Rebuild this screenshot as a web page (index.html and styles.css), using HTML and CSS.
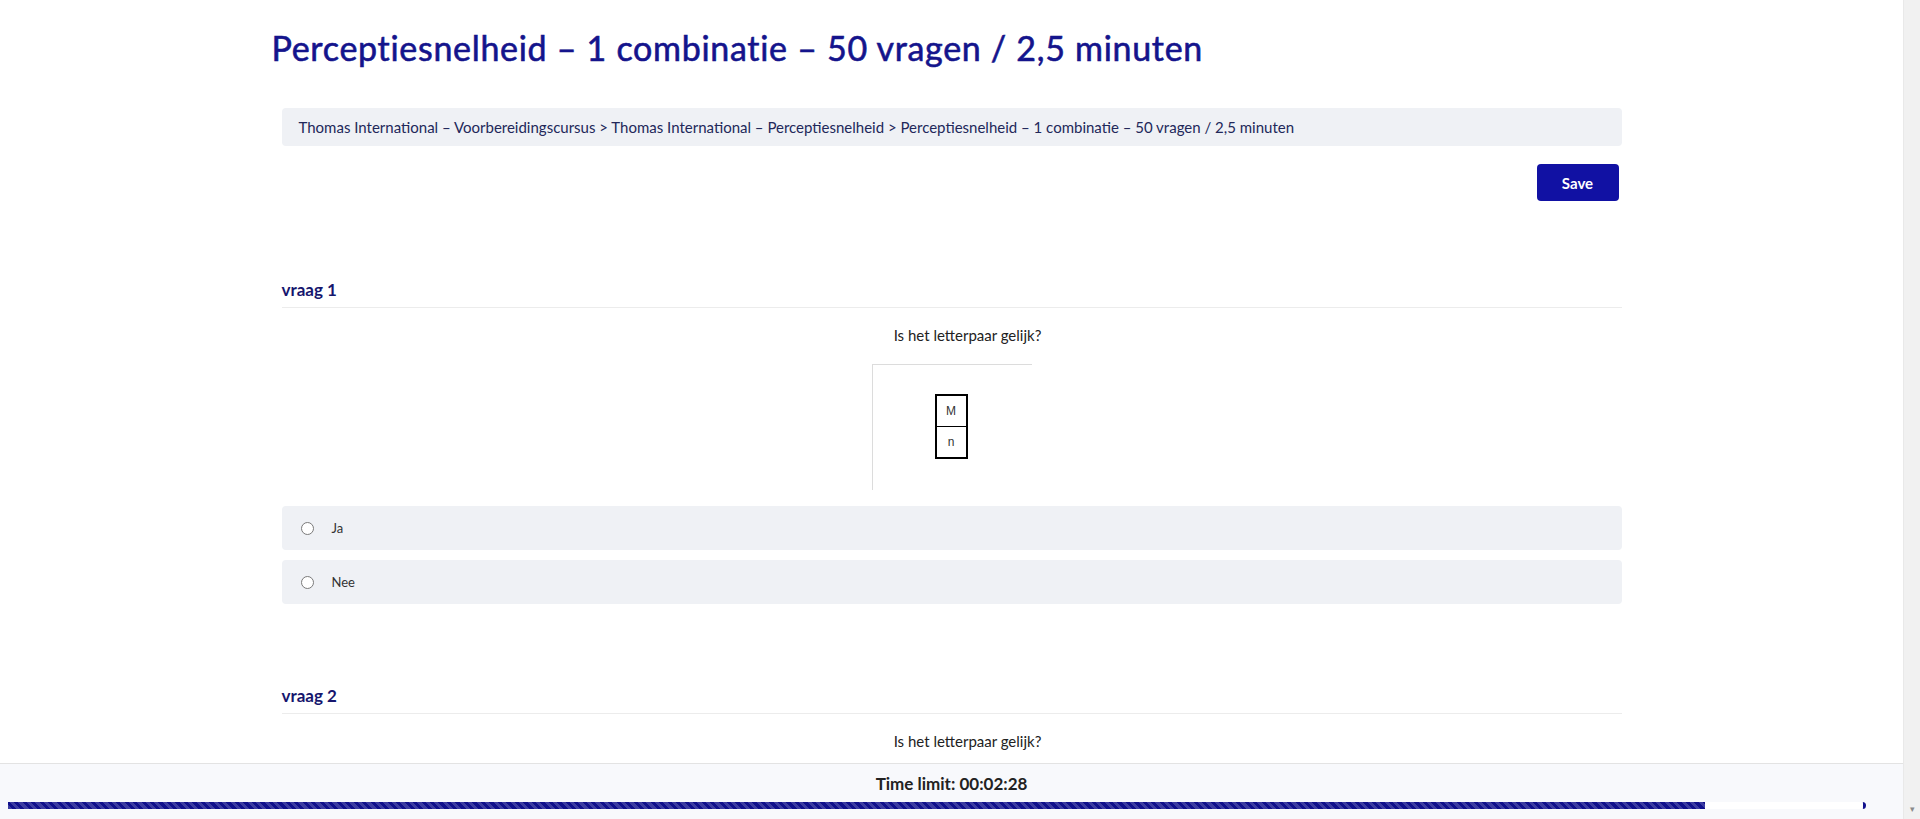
FILE: index.html
```html
<!DOCTYPE html>
<html lang="nl">
<head>
    <meta charset="UTF-8">
    <meta name="viewport" content="width=device-width, initial-scale=1.0">
    <title>Perceptiesnelheid</title>
    <link rel="stylesheet" href="styles.css">
</head>
<body>
    <div class="page">
        <div class="quiz-container">
            <h1 class="quiz-title">Perceptiesnelheid – 1 combinatie – 50 vragen / 2,5 minuten</h1>

            <div class="breadcrumb">
                Thomas International – Voorbereidingscursus &gt; Thomas International – Perceptiesnelheid &gt; Perceptiesnelheid – 1 combinatie – 50 vragen / 2,5 minuten
            </div>

            <div class="quiz-actions">
                <button type="button" class="btn-save">Save</button>
            </div>

            <div class="question">
                <h3 class="question-label">vraag 1</h3>
                <p class="question-text">Is het letterpaar gelijk?</p>
                <div class="pair-figure">
                    <div class="pair-box">
                        <span>M</span>
                        <span>n</span>
                    </div>
                </div>
                <label class="option"><span class="radio"></span>Ja</label>
                <label class="option"><span class="radio"></span>Nee</label>
            </div>

            <div class="question">
                <h3 class="question-label">vraag 2</h3>
                <p class="question-text">Is het letterpaar gelijk?</p>
            </div>
        </div>
    </div>

    <!-- window scrollbar -->
    <div class="scrollbar">
        <span class="scroll-arrow">&#9662;</span>
    </div>

    <!-- fixed timer at the bottom -->
    <div class="timer-bar">
        <div class="timer-text">Time limit: 00:02:28</div>
        <div class="timer-track">
            <div class="timer-fill" style="width: 91.5%"></div>
        </div>
    </div>
</body>
</html>
```

FILE: styles.css
```css
html, body {
    margin: 0;
    height: 100%;
    overflow: hidden;
}
body {
    display: flex;
    font-family: Lato, "Liberation Sans", sans-serif;
    color: #222;
    background-color: #fff;
}
.page {
    flex: 1;
    height: 100vh;
    overflow: hidden;
}
.scrollbar {
    width: 17px;
    height: 100vh;
    background-color: #f1f1f1;
    border-left: 1px solid #e9e9e9;
    box-sizing: border-box;
    display: flex;
    flex-direction: column;
    justify-content: flex-end;
    align-items: center;
}
.scroll-arrow {
    font-size: 9px;
    line-height: 14px;
    color: #8a8a8a;
    margin-bottom: 3px;
}

.quiz-container {
    width: 1340px;
    margin: 0 auto;
    padding-top: 28px;
}
.quiz-title {
    margin: 0 0 40px -10px;
    font-size: 34px;
    line-height: 40px;
    font-weight: 400;
    letter-spacing: 0.7px;
    -webkit-text-stroke: 0.6px #14148c;
    color: #14148c;
}
.breadcrumb {
    background-color: #eff1f5;
    border-radius: 4px;
    padding: 9px 17px;
    font-size: 15px;
    line-height: 20px;
    color: #22285a;
}
.quiz-actions {
    display: flex;
    justify-content: flex-end;
    margin-top: 18px;
    padding-right: 3px;
}
.btn-save {
    width: 82px;
    height: 37px;
    border: none;
    border-radius: 4px;
    background-color: #1111a3;
    color: #fff;
    font-family: inherit;
    font-size: 15px;
    font-weight: 700;
    cursor: pointer;
}
.btn-save:hover {
    background-color: #0b0b7a;
}

.question {
    margin-top: 79px;
}
.question + .question {
    margin-top: 82px;
}
.question-label {
    margin: 0;
    padding-bottom: 7px;
    border-bottom: 1px solid #ececec;
    font-size: 17px;
    line-height: 20px;
    font-weight: 700;
    color: #16166e;
}
.question-text {
    margin: 18px 0 0;
    padding-left: 32px;
    text-align: center;
    font-size: 15px;
    line-height: 18px;
    color: #222;
}
.pair-figure {
    width: 160px;
    height: 126px;
    margin: 20px auto 16px;
    border-top: 1px solid #dcdcdc;
    border-left: 1px solid #dcdcdc;
    padding: 29px 0 0 62px;
    box-sizing: border-box;
}
.pair-box {
    width: 33px;
    border: 2px solid #000;
    box-sizing: border-box;
    display: flex;
    flex-direction: column;
}
.pair-box span {
    height: 30px;
    display: flex;
    align-items: center;
    justify-content: center;
    font-family: "Liberation Sans", Arial, sans-serif;
    font-size: 12px;
    color: #333;
}
.pair-box span + span {
    border-top: 1px solid #000;
}

.option {
    display: flex;
    align-items: center;
    gap: 18px;
    height: 44px;
    padding-left: 19px;
    margin-bottom: 10px;
    background-color: #eff1f5;
    border-radius: 4px;
    font-size: 13px;
    color: #333;
    cursor: pointer;
}
.radio {
    width: 13px;
    height: 13px;
    border: 1px solid #7a7a7a;
    border-radius: 50%;
    background-color: #fff;
    box-sizing: border-box;
}

/* timer footer */
.timer-bar {
    position: fixed;
    left: 0;
    right: 17px;
    bottom: 0;
    height: 56px;
    background-color: #f8f9fc;
    border-top: 1px solid #e3e3e3;
    box-sizing: border-box;
    padding-top: 10px;
}
.timer-text {
    text-align: center;
    font-size: 17px;
    line-height: 20px;
    font-weight: 700;
    color: #222;
}
.timer-track {
    margin: 8px 37px 0 8px;
    height: 7px;
    border-right: 3px solid #10108c;
    border-radius: 0 4px 4px 0;
    background-color: #fff;
}
.timer-fill {
    height: 100%;
    background-color: #10108c;
    background-image: repeating-linear-gradient(45deg, rgba(255, 255, 255, 0.18) 0 3px, transparent 3px 6px);
}
```
